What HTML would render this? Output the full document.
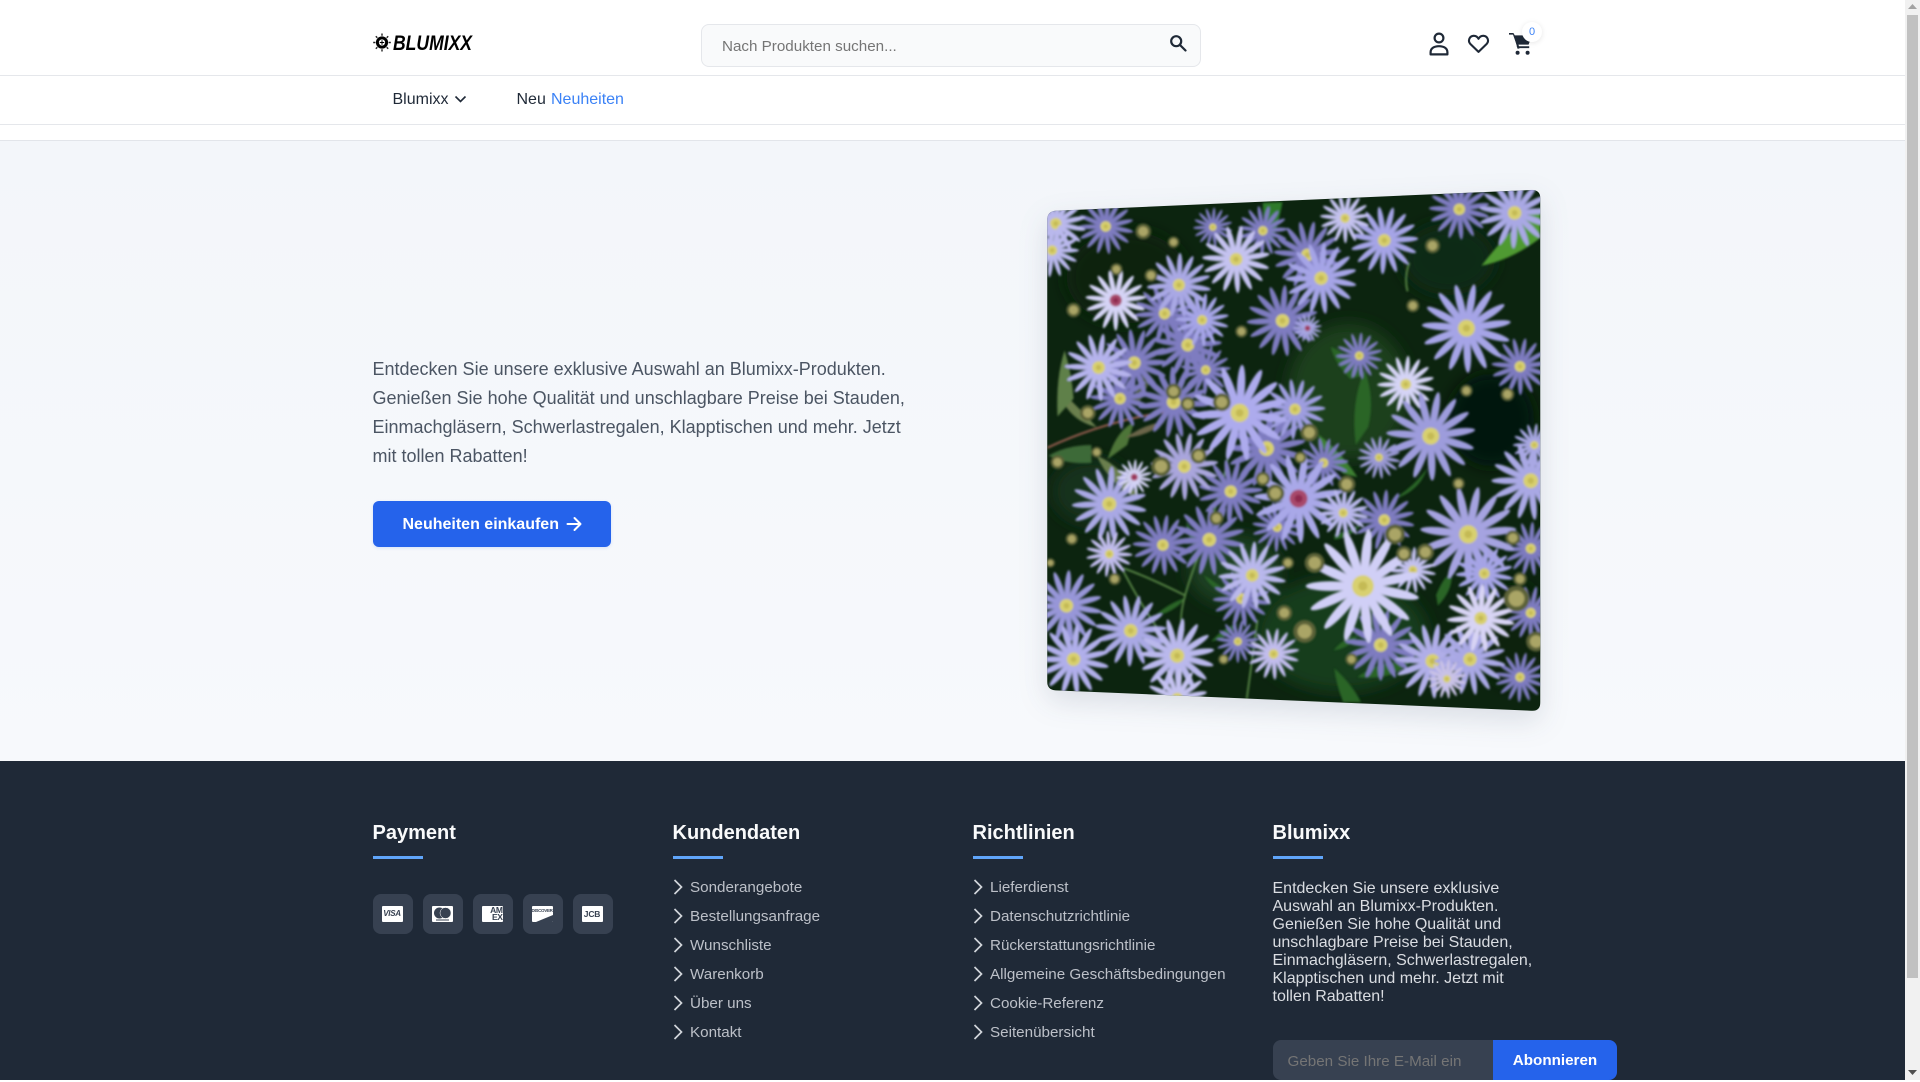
<!DOCTYPE html>
<html lang="de">
<head>
<meta charset="utf-8">
<title>Blumixx</title>
<style>
*{box-sizing:border-box;margin:0;padding:0}
html,body{width:1920px;height:1080px;overflow:hidden;background:#fff;font-family:"Liberation Sans",sans-serif;color:#1f2937}
.a{position:absolute;white-space:nowrap}
#top{position:absolute;left:0;top:0;width:1905px;height:140px;background:#fff}
.ln{position:absolute;left:0;width:1905px;height:1px;background:#e5e7eb}
#hero{position:absolute;left:0;top:141px;width:1905px;height:620px;background:linear-gradient(180deg,#f3f6fa,#f7f9fc)}
#foot{position:absolute;left:0;top:761px;width:1905px;height:319px;background:#1f2937}
#sb{position:absolute;left:1905px;top:0;width:15px;height:1080px;background:#f1f1f1}
#sb i{position:absolute;left:2px;top:15px;width:11px;height:963px;background:#c1c1c1}
h3{position:absolute;top:820.5px;font-size:20px;line-height:24px;font-weight:700;color:#f9fafb;white-space:nowrap}
.u{position:absolute;top:856px;width:50px;height:3px;background:#60a5fa}
.l{position:absolute;font-size:15.2px;line-height:20px;color:#bcc0c8;white-space:nowrap}
.c{position:absolute;width:10px;height:16px}
.pay{position:absolute;top:894px;width:40px;height:40px;background:#374151;border-radius:8px}
.card{position:absolute;left:9px;top:12px;width:21px;height:16px;background:#fff;border-radius:1px;color:#374151;font-weight:700;text-align:center;overflow:hidden}
</style>
</head>
<body>
<div id="top"></div>
<div class="ln" style="top:75px"></div>
<div class="ln" style="top:124px"></div>
<div class="ln" style="top:140px;background:#e2e5ea"></div>

<svg class="a" style="left:372px;top:32px" width="20" height="21" viewBox="0 0 20 21">
  <circle cx="10" cy="10.5" r="4.6" fill="none" stroke="#000" stroke-width="3"/>
  <path d="M7.8 10.5h4.4M10 8.3v4.4" stroke="#000" stroke-width="1"/>
  <path d="M10 1.5v2.2M10 17.3v2.2M1.2 10.5h2.2M16.6 10.5h2.2M3.8 4.3l1.5 1.5M14.7 15.2l1.5 1.5M16.2 4.3l-1.5 1.5M5.3 15.2l-1.5 1.5" stroke="#222" stroke-width="1.4"/>
</svg>
<svg class="a" style="left:393px;top:30px" width="82" height="24" viewBox="0 0 82 24">
  <text x="0" y="20" font-family="Liberation Sans" font-size="21" font-weight="700" font-style="italic" fill="#000" textLength="79" lengthAdjust="spacingAndGlyphs">BLUMIXX</text>
</svg>

<div class="a" style="left:701px;top:24px;width:500px;height:43px;background:#f9fafb;border:1px solid #e5e7eb;border-radius:8px"></div>
<div class="a" style="left:722px;top:37.5px;font-size:15.2px;line-height:18px;color:#757575">Nach Produkten suchen...</div>
<svg class="a" style="left:1169px;top:34px" width="18" height="18" viewBox="0 0 18 18" fill="none" stroke="#1f2937" stroke-width="2.2"><circle cx="7.2" cy="7.2" r="5"/><path d="M11 11l5.5 5.5" stroke-linecap="round"/></svg>

<svg class="a" style="left:1427px;top:29px" width="24" height="28" viewBox="0 0 24 28" fill="none" stroke="#1f2937" stroke-width="2.2">
  <circle cx="12" cy="9" r="4.4"/>
  <path d="M3.6 25.4v-2.2c0-3.8 3.4-6 8.4-6s8.4 2.2 8.4 6v2.2z" stroke-linejoin="round"/>
</svg>
<svg class="a" style="left:1467px;top:33px" width="23" height="21" viewBox="0 0 26 24" fill="none" stroke="#1f2937" stroke-width="2.4" stroke-linejoin="round">
  <path d="M13 21.6L3.6 12.4C.8 9.4 2.2 3.6 7.2 3.2 9.8 3 11.8 4.4 13 6.6 14.2 4.4 16.2 3 18.8 3.2c5 .4 6.4 6.2 3.6 9.2z"/>
</svg>
<svg class="a" style="left:1508px;top:31px" width="26" height="26" viewBox="0 0 26 26" fill="#1f2937">
  <path d="M1 2h4.4l1.4 2.4H24l-3.4 9.2H8.6L5 3.6H1z"/>
  <path d="M8.6 15.2h12.6v1.9H9.6z"/>
  <path d="M7 5l3.6 12.6" stroke="#1f2937" stroke-width="2" fill="none"/>
  <circle cx="9.6" cy="21.8" r="2"/><circle cx="19.6" cy="21.8" r="2"/>
</svg>
<div class="a" style="left:1522px;top:22px;width:20px;height:20px;border-radius:50%;background:#fff;box-shadow:0 1px 6px rgba(0,0,0,.1);color:#3b82f6;font-size:11px;line-height:20px;text-align:center">0</div>

<div class="a" style="left:392.5px;top:91px;font-size:16px;line-height:18px">Blumixx</div>
<svg class="a" style="left:454px;top:94px" width="13" height="10" viewBox="0 0 13 10" fill="none" stroke="#1f2937" stroke-width="1.6"><path d="M1.5 2.5l5 5 5-5"/></svg>
<div class="a" style="left:516.5px;top:91px;font-size:16px;line-height:18px">Neu</div>
<div class="a" style="left:551px;top:91px;font-size:16px;line-height:18px;color:#3b82f6">Neuheiten</div>

<div id="hero"></div>
<div class="a" style="left:372.5px;top:355px;font-size:18px;line-height:29px;color:#4b5563">Entdecken Sie unsere exklusive Auswahl an Blumixx-Produkten.<br>Genießen Sie hohe Qualität und unschlagbare Preise bei Stauden,<br>Einmachgläsern, Schwerlastregalen, Klapptischen und mehr. Jetzt<br>mit tollen Rabatten!</div>
<div class="a" style="left:372.5px;top:501px;width:238px;height:46px;background:#2563eb;border-radius:6px;box-shadow:0 1px 3px rgba(37,99,235,.15)"></div>
<div class="a" style="left:402.5px;top:515px;font-size:16px;line-height:20px;font-weight:700;color:#fff">Neuheiten einkaufen</div>
<svg class="a" style="left:564px;top:514px" width="20" height="20" viewBox="0 0 20 20" fill="none" stroke="#fff" stroke-width="2" stroke-linecap="round" stroke-linejoin="round"><path d="M3.5 10h13M10.5 4l6 6-6 6"/></svg>

<svg class="a" style="left:1020px;top:170px;overflow:visible;filter:drop-shadow(0 10px 14px rgba(30,50,80,.13))" width="560" height="560" viewBox="0 0 1568 1568">
<defs>
  <clipPath id="clip"><path d="M76 140Q76 116 100 114L1432 56Q1457 55 1457 80V1490Q1457 1516 1432 1514L100 1457Q76 1456 76 1432Z"/></clipPath>
  <filter id="bl" x="-2%" y="-2%" width="104%" height="104%"><feGaussianBlur stdDeviation="3"/></filter>
  <filter id="bl2" x="-10%" y="-10%" width="120%" height="120%"><feGaussianBlur stdDeviation="22"/></filter>
  <ellipse id="p" cx="0" cy="-56" rx="8.5" ry="44"/>
  <g id="f">
    <use href="#p"/><use href="#p" transform="rotate(24)"/><use href="#p" transform="rotate(48)"/><use href="#p" transform="rotate(72)"/><use href="#p" transform="rotate(96)"/><use href="#p" transform="rotate(120)"/><use href="#p" transform="rotate(144)"/><use href="#p" transform="rotate(168)"/><use href="#p" transform="rotate(192)"/><use href="#p" transform="rotate(216)"/><use href="#p" transform="rotate(240)"/><use href="#p" transform="rotate(264)"/><use href="#p" transform="rotate(288)"/><use href="#p" transform="rotate(312)"/><use href="#p" transform="rotate(336)"/>
    <circle r="19" fill="#d8d070"/><circle r="8" fill="#c4ba55"/>
  </g>
  <g id="z">
    <use href="#p"/><use href="#p" transform="rotate(24)"/><use href="#p" transform="rotate(48)"/><use href="#p" transform="rotate(72)"/><use href="#p" transform="rotate(96)"/><use href="#p" transform="rotate(120)"/><use href="#p" transform="rotate(144)"/><use href="#p" transform="rotate(168)"/><use href="#p" transform="rotate(192)"/><use href="#p" transform="rotate(216)"/><use href="#p" transform="rotate(240)"/><use href="#p" transform="rotate(264)"/><use href="#p" transform="rotate(288)"/><use href="#p" transform="rotate(312)"/><use href="#p" transform="rotate(336)"/>
    <circle r="20" fill="#a84a6c"/><circle r="9" fill="#8e2c50"/>
  </g>
  <g id="b"><circle r="100" fill="#5c6238"/><circle r="62" fill="#aaa566"/></g>
</defs>
<g clip-path="url(#clip)">
<rect x="70" y="50" width="1395" height="1470" fill="#0c240f"/>
<g filter="url(#bl2)">
  <ellipse cx="300" cy="300" rx="170" ry="130" fill="#08200c"/>
  <ellipse cx="920" cy="620" rx="170" ry="190" fill="#1a3f1c"/>
  <ellipse cx="1320" cy="700" rx="120" ry="130" fill="#061508"/>
  <ellipse cx="900" cy="1300" rx="240" ry="160" fill="#173d1a"/>
  <ellipse cx="600" cy="1120" rx="130" ry="100" fill="#1c3f20"/>
  <ellipse cx="200" cy="900" rx="110" ry="90" fill="#15301a"/>
  <ellipse cx="1200" cy="250" rx="130" ry="100" fill="#102c14"/>
  <ellipse cx="1380" cy="1300" rx="100" ry="140" fill="#0a200c"/>
</g>
<g filter="url(#bl)">
  <g fill="#2a6528">
    <path d="M1292 268Q1400 130 1457 105V190Q1380 250 1292 268Z" fill="#4f9a30"/>
    <path d="M680 92L735 90Q720 170 700 210Q680 160 680 92Z" fill="#2d7a2a"/>
    <path d="M870 495Q930 520 960 575L925 585Q880 540 870 495Z"/>
    <path d="M965 560Q995 640 975 720L940 770Q925 650 965 560Z"/>
    <path d="M835 740Q900 790 945 860L905 850Q850 800 835 740Z" fill="#3c7f30"/>
    <path d="M1040 925Q1100 890 1140 835Q1120 900 1040 925Z"/>
    <path d="M880 1395Q930 1440 955 1490L905 1490Q885 1440 880 1395Z"/>
    <path d="M945 1420Q1010 1370 1090 1380Q1040 1430 945 1420Z"/>
    <path d="M290 1300Q340 1290 385 1345Q320 1340 290 1300Z"/>
    <path d="M375 1250Q420 1210 465 1198Q430 1240 375 1250Z"/>
    <path d="M465 985Q500 1030 505 1075Q470 1040 465 985Z"/>
    <path d="M878 1345Q905 1310 945 1305Q920 1340 878 1345Z"/>
    <path d="M880 1020Q930 1010 960 985Q930 1030 880 1035Z"/>
    <path d="M1165 1190Q1190 1130 1210 1130Q1210 1180 1170 1220Z"/>
    <path d="M515 1135Q560 1160 590 1195Q540 1180 515 1135Z"/>
    <path d="M535 1320Q570 1280 610 1270Q590 1310 535 1320Z"/>
  </g>
  <g fill="#6a7f4e">
    <path d="M215 800Q290 830 335 925Q250 880 215 800Z"/>
    <path d="M105 610Q150 650 215 720Q130 700 105 610Z"/>
    <path d="M125 505Q145 570 150 640L105 690Q100 580 125 505Z" fill="#5f8048"/>
    <path d="M80 800Q130 770 200 770V820Q130 825 80 800Z" fill="#3e6a38"/>
    <path d="M245 810Q270 730 320 705L300 770Z" fill="#4d7438"/>
    <path d="M310 650Q340 590 355 535L360 600L330 660Z" fill="#4f5e3e"/>
    <path d="M295 750Q350 710 405 705Q360 745 295 750Z" fill="#6a6548"/>
  </g>
  <path d="M76 778Q200 720 340 690T470 675" fill="none" stroke="#8e5a4c" stroke-width="6"/>
  <g fill="none" stroke="#5b8a48" stroke-width="5">
    <path d="M590 760Q570 900 500 1080T460 1290"/>
    <path d="M290 1115Q360 1140 460 1190"/>
    <path d="M285 1115Q340 1220 390 1290"/>
    <path d="M665 1260Q650 1370 635 1480"/>
    <path d="M1090 260Q1075 300 1085 340"/>
  </g>

  <!-- back flowers -->
  <g fill="#7e7cc0">
    <use href="#f" transform="translate(1230 110) scale(.85) rotate(8)"/>
    <use href="#f" transform="translate(805 238) scale(.95) rotate(11)"/>
    <use href="#f" transform="translate(240 158) scale(.78) rotate(5)"/>
    <use href="#f" transform="translate(405 402) scale(.85) rotate(3)"/>
    <use href="#f" transform="translate(470 490) scale(.95) rotate(14)"/>
    <use href="#f" transform="translate(735 422) scale(1) rotate(4)"/>
    <use href="#f" transform="translate(320 540) scale(.95) rotate(17)"/>
    <use href="#f" transform="translate(280 640) scale(.85) rotate(9)"/>
    <use href="#f" transform="translate(430 650) scale(1) rotate(22)"/>
    <use href="#f" transform="translate(950 520) scale(.65) rotate(5)"/>
    <use href="#f" transform="translate(1400 550) scale(.8) rotate(11)"/>
    <use href="#f" transform="translate(690 780) scale(1.1) rotate(7)"/>
    <use href="#f" transform="translate(590 900) scale(.9) rotate(15)"/>
    <use href="#f" transform="translate(400 1050) scale(.85) rotate(8)"/>
    <use href="#f" transform="translate(530 1035) scale(1) rotate(3)"/>
    <use href="#f" transform="translate(1010 1330) scale(1) rotate(12)"/>
    <use href="#f" transform="translate(1430 1240) scale(.75) rotate(12)"/>
    <use href="#f" transform="translate(610 1320) scale(.6) rotate(12)"/>
    <use href="#f" transform="translate(1430 1060) scale(.75) rotate(4)"/>
    <use href="#f" transform="translate(1020 980) scale(.85) rotate(4)"/>
    <use href="#f" transform="translate(620 1200) scale(.8) rotate(4)"/>
    <use href="#f" transform="translate(540 160) scale(.55) rotate(4)"/>
    <use href="#f" transform="translate(680 170) scale(.7) rotate(14)"/>
    <use href="#f" transform="translate(520 560) scale(.7) rotate(14)"/>
    <use href="#f" transform="translate(850 820) scale(.7) rotate(14)"/>
    <use href="#f" transform="translate(720 1000) scale(.7) rotate(14)"/>
    <use href="#f" transform="translate(1400 1420) scale(.7) rotate(14)"/>
  </g>
  <!-- mid & front flowers -->
  <g fill="#a5a4e6">
    <use href="#f" transform="translate(100 150) scale(.85) rotate(6)" fill="#b9b8ec"/>
    <use href="#f" transform="translate(90 225) scale(.75) rotate(18)" fill="#b9b8ec"/>
    <use href="#f" transform="translate(605 250) scale(.95) rotate(9)" fill="#c4c2f0"/>
    <use href="#f" transform="translate(1020 197) scale(.95) rotate(15)"/>
    <use href="#f" transform="translate(843 303) scale(1) rotate(5)"/>
    <use href="#f" transform="translate(910 135) scale(.7) rotate(11)" fill="#c4c2f0"/>
    <use href="#f" transform="translate(1385 120) scale(1) rotate(14)" fill="#a9a8e4"/>
    <use href="#z" transform="translate(268 365) scale(.85) rotate(12)" fill="#d5d4f6"/>
    <use href="#f" transform="translate(445 322) scale(.9) rotate(2)" fill="#a9a8e4"/>
    <use href="#f" transform="translate(510 420) scale(.75) rotate(8)"/>
    <use href="#f" transform="translate(220 553) scale(.95) rotate(8)" fill="#b5b3ec"/>
    <use href="#z" transform="translate(805 443) scale(.4) rotate(8)" fill="#a9a8e4"/>
    <use href="#f" transform="translate(1250 443) scale(1.25) rotate(10)" fill="#a5a4e6"/>
    <use href="#f" transform="translate(1080 600) scale(.8) rotate(5)" fill="#d5d4f6"/>
    <use href="#f" transform="translate(1150 745) scale(1.25) rotate(10)" fill="#9d9cdc"/>
    <use href="#f" transform="translate(770 670) scale(.85) rotate(16)" fill="#9e9de0"/>
    <use href="#f" transform="translate(615 680) scale(1.35) rotate(3)" fill="#adabed"/>
    <use href="#f" transform="translate(460 830) scale(.95) rotate(11)" fill="#a9a5dc"/>
    <use href="#f" transform="translate(250 935) scale(1.05) rotate(4)" fill="#a9a8e4"/>
    <use href="#z" transform="translate(320 860) scale(.5) rotate(4)" fill="#d5d4f6"/>
    <use href="#f" transform="translate(1005 805) scale(.6) rotate(4)" fill="#9b9ad6"/>
    <use href="#f" transform="translate(250 1075) scale(.65) rotate(20)" fill="#c2bdee"/>
    <use href="#z" transform="translate(780 920) scale(1.25) rotate(9)" fill="#a9a8e8"/>
    <use href="#f" transform="translate(1430 870) scale(1.1) rotate(6)" fill="#a9a8e4"/>
    <use href="#f" transform="translate(1440 770) scale(.6) rotate(6)" fill="#a9a8e4"/>
    <use href="#f" transform="translate(1255 1020) scale(1.35) rotate(12)" fill="#a5a3e0"/>
    <use href="#f" transform="translate(1300 1130) scale(.8) rotate(4)"/>
    <use href="#f" transform="translate(905 960) scale(.7) rotate(4)" fill="#b9b8ec"/>
    <use href="#f" transform="translate(650 1135) scale(.95) rotate(4)" fill="#b9b8ec"/>
    <use href="#f" transform="translate(1100 1120) scale(.65) rotate(4)" fill="#c4c2f0"/>
    <use href="#f" transform="translate(130 1220) scale(1) rotate(4)" fill="#9796d8"/>
    <use href="#f" transform="translate(310 1290) scale(1) rotate(14)" fill="#a9a8e4"/>
    <use href="#f" transform="translate(150 1370) scale(1) rotate(6)" fill="#b0afea"/>
    <use href="#f" transform="translate(440 1360) scale(1.05) rotate(9)" fill="#b9b8ec"/>
    <use href="#f" transform="translate(710 1355) scale(.72) rotate(9)" fill="#c2bdee"/>
    <use href="#f" transform="translate(1155 1375) scale(1.05) rotate(9)" fill="#b0aee8"/>
    <use href="#f" transform="translate(1260 1370) scale(1) rotate(3)" fill="#a9a8e4"/>
    <use href="#f" transform="translate(1290 1255) scale(.95) rotate(3)" fill="#d8d4f4"/>
    <use href="#f" transform="translate(960 1165) scale(1.6) rotate(6)" fill="#d0cff6"/>
    <use href="#f" transform="translate(1195 1425) scale(.55) rotate(6)" fill="#c9c2e6"/>
    <use href="#f" transform="translate(440 1480) scale(.85) rotate(6)" fill="#c4c2f0"/>
  </g>
  <!-- buds -->
  <use href="#b" transform="translate(345 172) scale(.22)"/>
  <use href="#b" transform="translate(430 202) scale(.16)"/>
  <use href="#b" transform="translate(270 278) scale(.17)"/>
  <use href="#b" transform="translate(367 295) scale(.18)"/>
  <use href="#b" transform="translate(1155 212) scale(.21)"/>
  <use href="#b" transform="translate(1100 380) scale(.18)"/>
  <use href="#b" transform="translate(620 452) scale(.17)"/>
  <use href="#b" transform="translate(150 392) scale(.2)"/>
  <use href="#b" transform="translate(1250 618) scale(.17)"/>
  <use href="#b" transform="translate(1365 628) scale(.19)"/>
  <use href="#b" transform="translate(1228 878) scale(.17)"/>
  <use href="#b" transform="translate(145 1033) scale(.17)"/>
  <use href="#b" transform="translate(85 1100) scale(.13)"/>
  <use href="#b" transform="translate(265 1145) scale(.17)"/>
  <use href="#b" transform="translate(750 1100) scale(.17)"/>
  <use href="#b" transform="translate(825 1100) scale(.28)"/>
  <use href="#b" transform="translate(570 1370) scale(.15)"/>
  <use href="#b" transform="translate(928 1370) scale(.17)"/>
  <use href="#b" transform="translate(1380 1030) scale(.21)"/>
  <use href="#b" transform="translate(1400 1145) scale(.19)"/>
  <use href="#b" transform="translate(215 790) scale(.15)"/>
  <use href="#b" transform="translate(105 818) scale(.19)"/>
  <use href="#b" transform="translate(190 680) scale(.22)"/>
  <use href="#b" transform="translate(470 655) scale(.2)"/>
  <use href="#b" transform="translate(565 650) scale(.25)"/>
  <use href="#b" transform="translate(395 830) scale(.28)"/>
  <use href="#b" transform="translate(785 805) scale(.17)"/>
  <use href="#b" transform="translate(680 865) scale(.2)"/>
  <use href="#b" transform="translate(715 905) scale(.25)"/>
  <use href="#b" transform="translate(915 880) scale(.24)"/>
  <use href="#b" transform="translate(1050 1020) scale(.28)"/>
  <use href="#b" transform="translate(1135 1070) scale(.24)"/>
  <use href="#b" transform="translate(1075 1075) scale(.22)"/>
  <use href="#b" transform="translate(500 800) scale(.22)"/>
  <use href="#b" transform="translate(430 620) scale(.22)"/>
  <use href="#b" transform="translate(810 735) scale(.25)"/>
  <use href="#b" transform="translate(550 975) scale(.2)"/>
  <use href="#b" transform="translate(740 1240) scale(.22)"/>
  <use href="#b" transform="translate(797 1292) scale(.32)"/>
  <use href="#b" transform="translate(1390 1200) scale(.36)"/>
  <use href="#b" transform="translate(1445 1320) scale(.28)"/>
</g>
</g>
</svg>

<div id="foot"></div>
<h3 style="left:372.5px">Payment</h3><div class="u" style="left:372.5px"></div>
<h3 style="left:672.5px">Kundendaten</h3><div class="u" style="left:672.5px"></div>
<h3 style="left:972.5px">Richtlinien</h3><div class="u" style="left:972.5px"></div>
<h3 style="left:1272.5px">Blumixx</h3><div class="u" style="left:1272.5px"></div>

<div class="pay" style="left:372.5px"><div class="card" style="font-size:8px;line-height:16px;font-style:italic;letter-spacing:-.3px">VISA</div></div>
<div class="pay" style="left:422.5px"><div class="card"><svg width="21" height="16" viewBox="0 0 21 16"><circle cx="7.5" cy="7" r="5.5" fill="#374151"/><circle cx="13.5" cy="7" r="5.5" fill="#374151" stroke="#fff" stroke-width=".5"/><rect x="4" y="13.5" width="13" height="1" fill="#374151"/></svg></div></div>
<div class="pay" style="left:472.5px"><div class="card" style="font-size:8.5px;line-height:7.5px;text-align:right;letter-spacing:-.4px"><div style="padding-top:.5px">AM</div><div>EX</div></div></div>
<div class="pay" style="left:522.5px"><div class="card" style="font-size:4.5px;line-height:9px;letter-spacing:-.3px">DISCOVER<svg style="position:absolute;left:0;top:8px" width="21" height="8" viewBox="0 0 21 8"><path d="M4 8L21 1v7z" fill="#374151"/></svg></div></div>
<div class="pay" style="left:572.5px"><div class="card" style="font-size:8.5px;line-height:16px;letter-spacing:-.2px">JCB</div></div>

<svg width="0" height="0" style="position:absolute"><defs><path id="ch" d="M1.5 1l7 7-7 7" fill="none" stroke="#d1d5db" stroke-width="1.7"/></defs></svg>

<svg class="c" style="left:672.5px;top:879px"><use href="#ch"/></svg><div class="l" style="left:690px;top:878px">Sonderangebote</div>
<svg class="c" style="left:672.5px;top:908px"><use href="#ch"/></svg><div class="l" style="left:690px;top:907px">Bestellungsanfrage</div>
<svg class="c" style="left:672.5px;top:937px"><use href="#ch"/></svg><div class="l" style="left:690px;top:936px">Wunschliste</div>
<svg class="c" style="left:672.5px;top:966px"><use href="#ch"/></svg><div class="l" style="left:690px;top:965px">Warenkorb</div>
<svg class="c" style="left:672.5px;top:995px"><use href="#ch"/></svg><div class="l" style="left:690px;top:994px">Über uns</div>
<svg class="c" style="left:672.5px;top:1024px"><use href="#ch"/></svg><div class="l" style="left:690px;top:1023px">Kontakt</div>

<svg class="c" style="left:972.5px;top:879px"><use href="#ch"/></svg><div class="l" style="left:990px;top:878px">Lieferdienst</div>
<svg class="c" style="left:972.5px;top:908px"><use href="#ch"/></svg><div class="l" style="left:990px;top:907px">Datenschutzrichtlinie</div>
<svg class="c" style="left:972.5px;top:937px"><use href="#ch"/></svg><div class="l" style="left:990px;top:936px">Rückerstattungsrichtlinie</div>
<svg class="c" style="left:972.5px;top:966px"><use href="#ch"/></svg><div class="l" style="left:990px;top:965px">Allgemeine Geschäftsbedingungen</div>
<svg class="c" style="left:972.5px;top:995px"><use href="#ch"/></svg><div class="l" style="left:990px;top:994px">Cookie-Referenz</div>
<svg class="c" style="left:972.5px;top:1024px"><use href="#ch"/></svg><div class="l" style="left:990px;top:1023px">Seitenübersicht</div>

<div class="a" style="left:1272.5px;top:880px;font-size:16px;line-height:18px;color:#dadde2">Entdecken Sie unsere exklusive<br>Auswahl an Blumixx-Produkten.<br>Genießen Sie hohe Qualität und<br>unschlagbare Preise bei Stauden,<br>Einmachgläsern, Schwerlastregalen,<br>Klapptischen und mehr. Jetzt mit<br>tollen Rabatten!</div>

<div class="a" style="left:1272.5px;top:1040px;width:220.5px;height:40px;background:#374151;border-radius:8px 0 0 8px"></div>
<div class="a" style="left:1287.5px;top:1052.5px;font-size:15.2px;line-height:18px;color:#757575">Geben Sie Ihre E-Mail ein</div>
<div class="a" style="left:1493px;top:1040px;width:124px;height:40px;background:#2563eb;border-radius:0 8px 8px 0;color:#fff;font-weight:700;font-size:15.2px;line-height:42px;text-align:center">Abonnieren</div>

<div id="sb"><i></i>
  <svg style="position:absolute;left:3px;top:4px" width="9" height="6"><path d="M4.5 0L9 5H0z" fill="#a3a3a3"/></svg>
  <svg style="position:absolute;left:3px;top:1070px" width="9" height="6"><path d="M0 0h9L4.5 5z" fill="#505050"/></svg>
</div>
</body>
</html>
